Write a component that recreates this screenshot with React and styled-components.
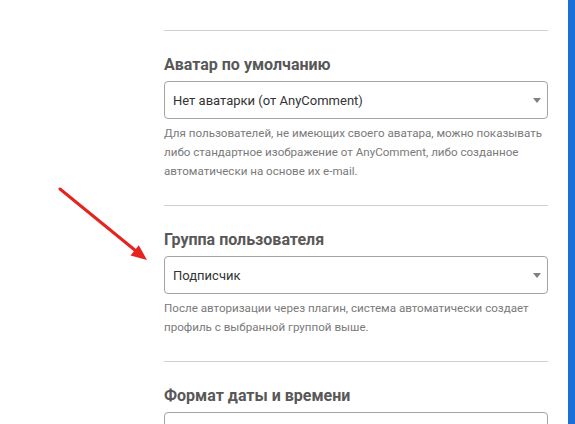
import React from 'react';
import styled, { createGlobalStyle } from 'styled-components';

const GlobalStyle = createGlobalStyle`
  html, body {
    margin: 0;
    padding: 0;
    background: #fff;
    overflow: hidden;
  }
  body {
    font-family: Roboto, "Noto Sans", "Liberation Sans", sans-serif;
  }
`;

const Page = styled.div`
  position: relative;
  display: flex;
  width: 575px;
  height: 424px;
  overflow: hidden;
`;

const Main = styled.div`
  flex: 1;
  padding-left: 164px;
  margin-top: -13px;
`;

const Column = styled.div`
  width: 384px;
`;

const Section = styled.section`
  padding: 24px 0 24px;
  border-bottom: 1px solid #cfcfcf;
  &:first-child {
    padding-top: 0;
  }
`;

const Heading = styled.h3`
  margin: 0 0 6px;
  font-size: 16px;
  line-height: 20px;
  font-weight: 700;
  color: #585858;
`;

const Select = styled.div`
  box-sizing: border-box;
  height: 38px;
  display: flex;
  align-items: center;
  justify-content: space-between;
  padding: 0 6px 0 8px;
  border: 1px solid #a4a4a4;
  border-radius: 4px;
  background: #fff;
  font-size: 13px;
  color: #333;
`;

const Caret = styled.span`
  width: 0;
  height: 0;
  border-left: 4px solid transparent;
  border-right: 4px solid transparent;
  border-top: 5px solid #808080;
`;

const Help = styled.p`
  margin: ${(p) => (p.$flush ? '-3px 0 3px' : '5px 0 0')};
  font-size: 11.6px;
  line-height: 19px;
  color: #7a7a7a;
`;

const SideBar = styled.div`
  width: 7px;
  flex-shrink: 0;
  background: #1a6fd9;
`;

const Arrow = styled.svg`
  position: absolute;
  left: 0;
  top: 0;
  pointer-events: none;
`;

const SelectBox = ({ children }) => (
  <Select>
    <span>{children}</span>
    <Caret />
  </Select>
);

export default function App() {
  return (
    <>
      <GlobalStyle />
      <Page>
        <Main>
          <Column>
            <Section>
              <Help $flush>при регистрации через социальные сети.</Help>
            </Section>
            <Section>
              <Heading>Аватар по умолчанию</Heading>
              <SelectBox>Нет аватарки (от AnyComment)</SelectBox>
              <Help>
                Для пользователей, не имеющих своего аватара, можно показывать
                либо стандартное изображение от AnyComment, либо созданное
                автоматически на основе их e-mail.
              </Help>
            </Section>
            <Section>
              <Heading>Группа пользователя</Heading>
              <SelectBox>Подписчик</SelectBox>
              <Help>
                После авторизации через плагин, система автоматически создает
                профиль с выбранной группой выше.
              </Help>
            </Section>
            <Section>
              <Heading>Формат даты и времени</Heading>
              <SelectBox>Относительный (5 минут назад)</SelectBox>
            </Section>
          </Column>
        </Main>
        <SideBar />
        <Arrow width="200" height="300" viewBox="0 0 200 300">
          <line x1="60" y1="189" x2="136" y2="251" stroke="#e52420" strokeWidth="3" strokeLinecap="round" />
          <polygon points="147,260 130.5,255.5 138.8,245.2" fill="#e52420" />
        </Arrow>
      </Page>
    </>
  );
}
